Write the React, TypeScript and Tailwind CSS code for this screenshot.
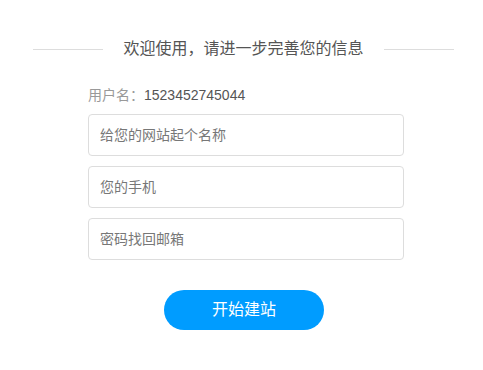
const font = {
  fontFamily: '"Liberation Sans", "Noto Sans CJK SC", sans-serif',
};

const fields = ["给您的网站起个名称", "您的手机", "密码找回邮箱"];

export default function App() {
  return (
    <div className="w-[483px] h-[370px] bg-white pt-[37px]" style={font}>
      <div className="ml-[33px] w-[421px] h-6 flex items-center justify-between">
        <div className="w-[70px] h-px bg-[#dddddd]" />
        <div className="text-base text-[#555555] leading-6">
          欢迎使用，请进一步完善您的信息
        </div>
        <div className="w-[70px] h-px bg-[#dddddd]" />
      </div>

      <div className="ml-[88px] w-[316px]">
        <div className="mt-6 h-5 leading-5 text-sm">
          <span className="text-[#999999]">用户名：</span>
          <span className="text-[#555555]">1523452745044</span>
        </div>

        <div className="mt-[9px] flex flex-col gap-[10px]">
          {fields.map((f) => (
            <input
              key={f}
              placeholder={f}
              className="h-[42px] w-full rounded border border-[#dddddd] pl-[11px] text-sm text-[#555555] placeholder:text-[#777777] outline-none"
              style={font}
            />
          ))}
        </div>
      </div>

      <div className="mt-[30px] ml-[164px]">
        <button
          className="w-40 h-10 rounded-full bg-[#009cff] text-white text-base"
          style={font}
        >
          开始建站
        </button>
      </div>
    </div>
  );
}
